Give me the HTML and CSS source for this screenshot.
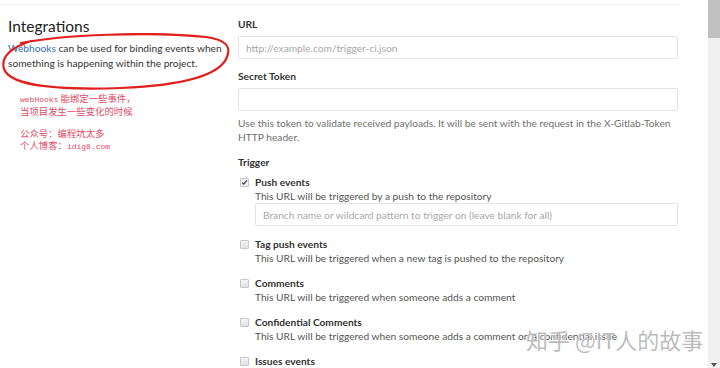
FILE: index.html
```html
<!DOCTYPE html>
<html lang="en">
<head>
<meta charset="utf-8">
<title>Integrations</title>
<link rel="stylesheet" href="styles.css">
</head>
<body>
<div class="page">
  <div class="content">
    <div class="topline"></div>
    <div class="layout">
      <aside class="left">
        <h3 class="title">Integrations</h3>
        <p class="intro"><a class="link" href="#">Webhooks</a> can be used for binding events when something is happening within the project.</p>
        <svg class="circle" width="232" height="60" viewBox="0 0 232 60">
          <path d="M20 10 C 60 2, 150 -2, 205 4 C 226 7, 230 14, 226 24 C 220 40, 190 52, 120 55 C 60 57, 10 54, 3 36 C 0 26, 6 16, 30 8" fill="none" stroke="#e0201c" stroke-width="2.2" stroke-linecap="round"/>
        </svg>
        <div class="note">
          <p><span class="lat">webHooks</span> 能绑定一些事件，<br>当项目发生一些变化的时候</p>
          <p>公众号：编程坑太多<br>个人博客：<span class="lat">idig8.com</span></p>
        </div>
      </aside>
      <main class="right">
        <label class="label">URL</label>
        <div class="input"><span class="ph">http://example.com/trigger-ci.json</span></div>
        <label class="label">Secret Token</label>
        <div class="input"></div>
        <p class="help">Use this token to validate received payloads. It will be sent with the request in the X-Gitlab-Token HTTP header.</p>
        <label class="label trigger">Trigger</label>
        <div class="event">
          <div class="ev-title"><span class="cb checked"><svg width="9" height="9" viewBox="0 0 9 9"><path d="M1.6 4.6 L3.6 6.6 L7.6 1.8" fill="none" stroke="#333" stroke-width="1.5"/></svg></span>Push events</div>
          <div class="ev-desc">This URL will be triggered by a push to the repository</div>
          <div class="input small"><span class="ph">Branch name or wildcard pattern to trigger on (leave blank for all)</span></div>
        </div>
        <div class="event">
          <div class="ev-title"><span class="cb"></span>Tag push events</div>
          <div class="ev-desc">This URL will be triggered when a new tag is pushed to the repository</div>
        </div>
        <div class="event">
          <div class="ev-title"><span class="cb"></span>Comments</div>
          <div class="ev-desc">This URL will be triggered when someone adds a comment</div>
        </div>
        <div class="event">
          <div class="ev-title"><span class="cb"></span>Confidential Comments</div>
          <div class="ev-desc">This URL will be triggered when someone adds a comment on a confidential issue</div>
        </div>
        <div class="event">
          <div class="ev-title"><span class="cb"></span>Issues events</div>
        </div>
      </main>
    </div>
    <div class="watermark">知乎 @IT人的故事</div>
  </div>
  <div class="scrollbar"><div class="thumb"></div><div class="arrow"></div></div>
</div>
</body>
</html>
```
FILE: styles.css
```css
* { box-sizing: border-box; }
html, body { margin: 0; padding: 0; height: 100%; overflow: hidden; background: #fff; }
body { font-family: "Lato", "Open Sans", sans-serif; font-size: 10.2px; color: #2e2e2e; }
.page { display: flex; height: 368px; }
.content { flex: 1; position: relative; overflow: hidden; }
.topline { width: 680px; height: 5px; border-bottom: 1px solid #efefef; }
.layout { display: flex; padding-left: 8px; }
.left { width: 230px; position: relative; }
.title { margin: 10px 0 0; font-size: 15.5px; font-weight: 400; line-height: 22px; color: #222; }
.intro { margin: 4px 0 0; line-height: 14.5px; color: #333; }
.link { color: #2f6fb0; text-decoration: none; }
.circle { position: absolute; left: -7px; top: 28px; }
.note { margin: 23px 0 0 12px; color: #e04a66; font-family: "Noto Sans CJK SC", sans-serif; font-size: 9.4px; line-height: 11.5px; }
.note p { margin: 0 0 11px; }
.note .lat { font-family: "Liberation Mono", monospace; font-size: 8px; }
.right { width: 440px; padding-top: 12px; }
.label { display: block; font-weight: 700; line-height: 14px; color: #333; margin-bottom: 5px; }
.input { height: 23px; border: 1px solid #e4e4e4; border-radius: 2px; padding: 0 7px; display: flex; align-items: center; margin-bottom: 10px; }
.ph { color: #a8a8a8; }
.help { margin: -5px 0 0; line-height: 14px; color: #6f6f6f; }
.trigger { margin-top: 11px; margin-bottom: 6px; }
.event { margin-bottom: 11px; padding-left: 2px; }
.ev-title { display: flex; align-items: center; font-weight: 700; line-height: 14px; color: #333; }
.cb { width: 9px; height: 9px; border: 1px solid #c8c8c8; border-radius: 1px; background: linear-gradient(#f4f4f4, #e2e2e2); margin-right: 6px; display: inline-flex; align-items: center; justify-content: center; }
.cb.checked { background: #f0f0f0; }
.cb svg { display: block; }
.ev-desc { padding-left: 15px; line-height: 14px; color: #555; }
.input.small { margin: 0 0 1px 15px; }
.watermark { position: absolute; left: 526px; top: 325px; font-family: "Noto Sans CJK SC", sans-serif; font-size: 22px; line-height: 28px; color: rgba(120,120,120,0.5); text-shadow: 0 0 2px #fff, 0 0 1px #fff; white-space: nowrap; }
.scrollbar { width: 12px; background: #f0f0f0; position: relative; }
.thumb { height: 38px; background: #c1c1c1; }
.arrow { position: absolute; left: 3px; bottom: 1px; width: 0; height: 0; border-left: 3px solid transparent; border-right: 3px solid transparent; border-top: 4px solid #505050; }
```
